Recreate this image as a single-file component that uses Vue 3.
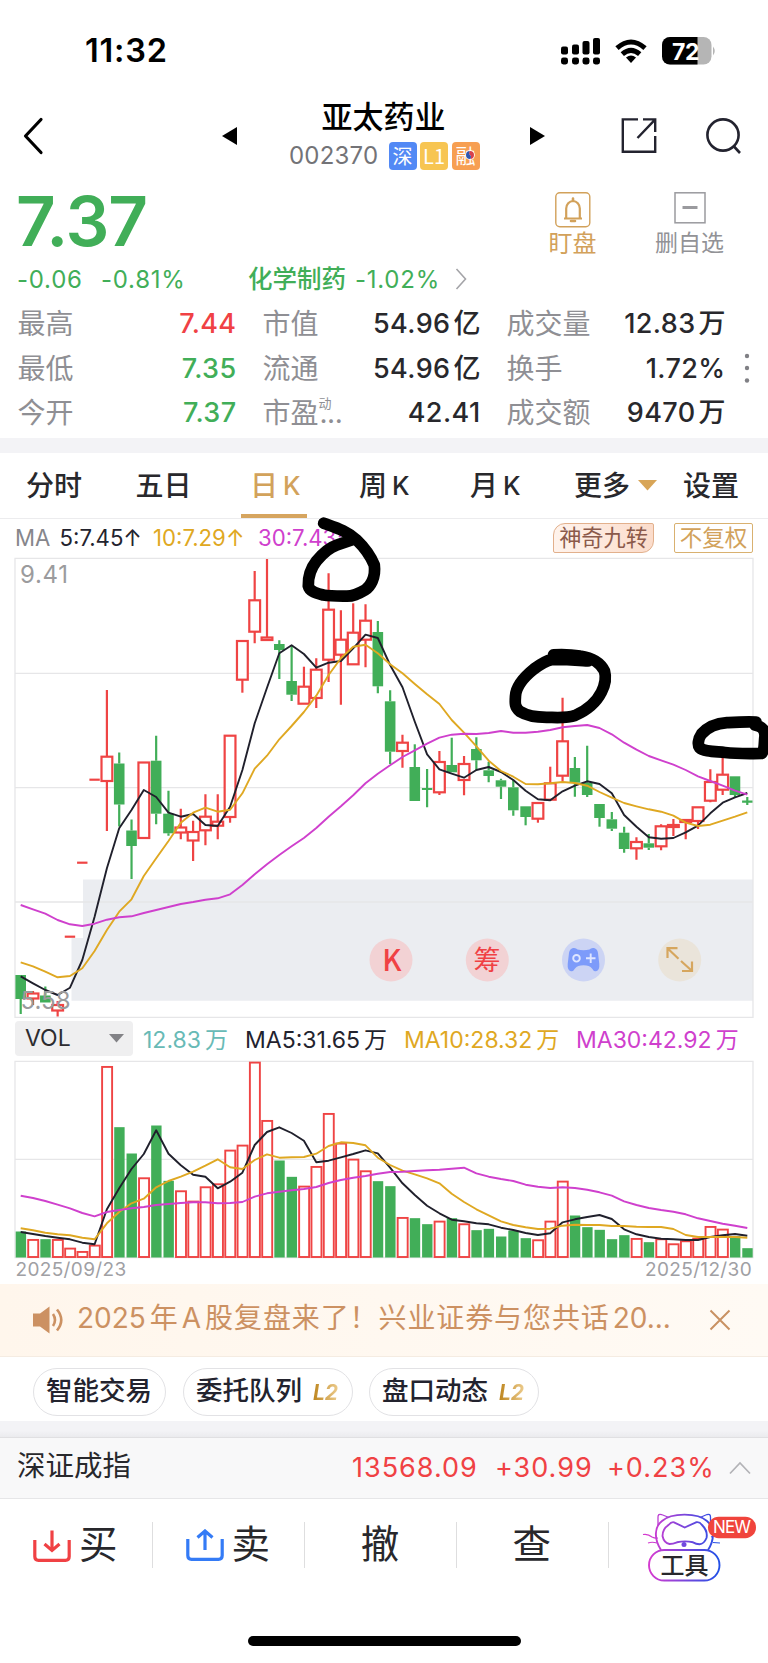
<script setup>
const STEP = 12.315
const X0 = 20.7
const cx = (i) => X0 + i * STEP

// type, body top, body bottom, wick high, wick low
const candles = [
  ['g', 975, 999, 975, 1014], ['r', 993.5, 998.5, 991, 1005], ['g', 995.5, 1002.5, 986.5, 1002.5], ['r', 1005, 1010.5, 1001, 1016.5],
  ['r', 936.7, 936.7, 936.7, 936.7], ['r', 862.7, 862.7, 862.7, 862.7], ['r', 779.7, 779.7, 779.7, 779.7], ['r', 756.7, 781, 690, 831],
  ['g', 763.5, 804.5, 752.5, 826.5], ['g', 830.5, 846, 819.5, 879], ['r', 762.5, 838, 762.5, 838], ['g', 760.7, 813.7, 735.7, 824.3],
  ['g', 813.7, 833.3, 790.7, 835.7], ['r', 827.5, 832.5, 808.7, 839.3], ['r', 832, 840.5, 820.7, 861], ['r', 816.7, 830.3, 794.3, 845.3],
  ['r', 821.7, 825.7, 794.3, 839.3], ['r', 735.7, 817, 735.7, 822.7], ['r', 641, 679.7, 641, 692.7], ['r', 600.3, 631.7, 571, 643.3],
  ['r', 637.5, 640, 559, 640], ['g', 644, 650, 640.3, 679], ['g', 681, 694.7, 645.7, 701], ['r', 686.7, 703.7, 666.7, 703.7],
  ['r', 669.7, 698, 658.3, 708], ['r', 609.7, 659.7, 573.3, 682], ['r', 639.7, 654.7, 610.3, 704.7], ['r', 632.7, 664.3, 603.3, 664.3],
  ['r', 620.7, 639.7, 604.3, 667.3], ['g', 632, 686.3, 621, 693.3], ['g', 701.3, 751.7, 690.3, 764], ['r', 742.7, 751, 734.7, 767.7],
  ['g', 767, 801, 744.3, 801], ['g', 789, 789, 769, 807.3], ['r', 762, 792.3, 751, 795], ['g', 765, 772.3, 737.7, 772.3],
  ['r', 764, 780, 756, 795.3], ['g', 749, 760.3, 737.3, 770], ['g', 770.3, 776, 761.7, 782.3], ['g', 780.3, 786.7, 778.7, 799],
  ['g', 787.3, 810.3, 780, 815.7], ['g', 806.3, 817, 806.3, 825.3], ['r', 803, 818.7, 803, 822.7], ['r', 783.3, 799.7, 766.7, 799.7],
  ['r', 741.3, 775.7, 697.7, 781.7], ['g', 768, 782.7, 757, 796.7], ['g', 782.7, 795, 745.7, 797], ['g', 804, 818, 804, 826.7],
  ['g', 819.3, 828.7, 812, 831], ['g', 832.7, 849, 826.7, 852.7], ['r', 842, 848.3, 837.3, 859.7], ['g', 843.3, 847.7, 834, 850],
  ['r', 826.3, 846.3, 824.3, 850.3], ['r', 825, 827, 819, 836], ['r', 820, 822, 819, 839.3], ['r', 807.3, 821, 807.3, 829],
  ['r', 782, 800.7, 769.3, 802.3], ['r', 774.7, 789.7, 753, 795], ['g', 776.3, 795, 776.3, 798], ['g', 801.7, 801.7, 797, 805]
].map(([c, t, b, h, l], i) => ({ c, t, b, h, l, x: cx(i), flat: b - t < 0.5 }))

const line = (ys) => ys.map((y, i) => `${cx(i).toFixed(1)},${y.toFixed(1)}`).join(' ')
const ma5 = line([976.3, 983.3, 990, 995, 987.7, 960, 916.7, 868.3, 828.3, 810, 790, 797, 812.7, 816.7, 814, 825, 826, 806.7, 770, 723.3,
  687.7, 653.3, 645.3, 654, 667.7, 662.7, 661, 648.3, 634.7, 638, 665, 687.3, 721.7, 754.3, 769.3, 773.7, 777.7, 770, 767, 772,
  780, 790.7, 799.3, 800.3, 791.3, 785.7, 781.3, 784, 793.3, 815, 826.7, 837.3, 838.7, 838, 832.3, 825.7, 813.3, 802.7, 797.3, 793])
const ma10 = line([962.3, 966.3, 971.7, 977.3, 976, 968.3, 951, 930, 911.7, 899.3, 876, 858.3, 841, 822.7, 812.7, 807.7, 811.7, 809.7, 793.3, 768.7,
  755.7, 739.3, 726, 712, 695.7, 675, 658.3, 646.7, 644.7, 653.3, 664.3, 673.3, 684, 694.3, 704, 720, 732.7, 746.3, 760.7, 771,
  776.7, 784, 784.3, 783.3, 782, 783, 785.7, 792, 797.7, 803, 806.3, 809.3, 811.7, 815.7, 822.7, 826, 824.7, 820.7, 816.7, 812.3])
const ma30 = line([905, 909.3, 913.7, 920, 924.3, 926, 923.7, 919.7, 917.3, 916.3, 913, 910, 907, 904, 902, 899.7, 898.3, 894.3, 885, 874.3,
  864.3, 855, 846.3, 838, 828, 816.7, 806.3, 795.3, 783.3, 773.7, 765.3, 757, 750.3, 743.7, 737.7, 734.7, 733.7, 734, 733, 731,
  732.7, 732.7, 731.7, 730, 727.3, 726, 725, 728, 734.3, 742.7, 749.7, 756, 760.3, 764.7, 770, 776.3, 781, 785.7, 790.7, 794.7])

// volume values share a scale of three units per pixel, measured from y = 1010
const vy = (v) => 1010 + v / 3
const volumes = ('g666 r688 g689 r688 r714 r724 r705 r169 g353 g432 r503 g348 g514 r542 r573 r530 r521 r420 r405 r156 r331 g453 g502 r528 r469 r310 r399 r447 r482 g515 ' +
  'g530 r622 g626 g644 r633 g626 r641 g662 g658 g681 g663 g686 r689 r633 r513 g618 g653 g661 g689 g677 r685 g698 r686 r701 r692 r684 r649 r657 g680 g716')
  .split(' ').map((s, i) => ({ c: s[0], y: vy(+s.slice(1)), x: cx(i) }))
const vline = (vs) => line(vs.map(vy))
const v5 = vline([666, 672, 678, 683, 688, 698, 703, 598, 535, 477, 432, 361, 431, 466, 494, 500, 535, 515, 488, 405, 366, 352, 369, 392, 457, 452, 442, 432, 421, 430,
  473, 520, 555, 587, 610, 629, 634, 640, 643, 653, 660, 669, 675, 670, 637, 628, 621, 615, 627, 658, 673, 681, 686, 688, 690, 690, 681, 676, 672, 677])
const v10 = vline([655, 661, 668, 673, 676, 683, 688, 640, 606, 580, 566, 532, 513, 500, 485, 467, 448, 472, 477, 450, 433, 443, 442, 441, 431, 408, 397, 399, 406, 443,
  465, 482, 493, 505, 520, 551, 576, 598, 616, 634, 645, 652, 657, 656, 647, 644, 645, 645, 648, 648, 650, 651, 651, 657, 675, 681, 681, 681, 681, 683])
const v30 = vline([557, 564, 573, 584, 595, 609, 619, 606, 600, 595, 591, 585, 582, 579, 577, 577, 580, 579, 576, 560, 550, 545, 541, 537, 531, 519, 510, 503, 498, 491,
  486, 485, 483, 481, 479, 476, 473, 490, 500, 507, 513, 524, 530, 534, 532, 534, 539, 547, 557, 574, 585, 594, 600, 605, 613, 625, 633, 641, 647, 654])

const stats = [
  { a: '最高', av: '7.44', ac: 'red', b: '市值', bv: '54.96', bu: '亿', c: '成交量', cv: '12.83', cu: '万' },
  { a: '最低', av: '7.35', ac: 'green', b: '流通', bv: '54.96', bu: '亿', c: '换手', cv: '1.72%', cu: '' },
  { a: '今开', av: '7.37', ac: 'green', b: '市盈', sup: '动', bv: '42.41', bu: '', c: '成交额', cv: '9470', cu: '万' }
]
</script>

<template>
  <div class="screen">
    <header class="status">
      <span class="time">11:32</span>
      <svg class="status-icons" width="160" height="32" viewBox="558 34 160 32">
        <g>
          <rect x="561" y="46.5" width="7" height="8" rx="2" /><rect x="572" y="44.5" width="7" height="10" rx="2" />
          <rect x="582.5" y="41" width="7" height="13.5" rx="2" /><rect x="593" y="38" width="7" height="16.5" rx="2" />
          <rect v-for="x in [561, 572, 582.5, 593]" :key="x" :x="x" y="57.5" width="7" height="7" rx="2.4" />
        </g>
        <g fill="none" stroke="#000" stroke-width="5">
          <path d="M617 48.2Q631 35.8 645 48.2" /><path d="M622.3 54.2Q631 46.6 639.7 54.2" />
        </g>
        <path d="M626 57.4Q631 53.4 636 57.4L631 63Z" />
        <rect x="662" y="37" width="49.500" height="27.500" rx="8" fill="#b5b5b5" />
        <path d="M670 37H697.500V64.500H670A8 8 0 0 1 662 56.500V45A8 8 0 0 1 670 37Z" />
        <path d="M713 46.500Q716.500 51 713 55.500Z" fill="#b5b5b5" />
        <text x="685.500" y="59.500" text-anchor="middle" class="batt">72</text>
      </svg>
    </header>

    <nav class="head">
      <svg class="back" width="24" height="40" viewBox="0 0 24 40"><path d="M20 3.500 4.500 20 20 36.500" fill="none" stroke="#000" stroke-width="3.200" stroke-linecap="round" stroke-linejoin="round" /></svg>
      <svg class="prev" width="15" height="18" viewBox="0 0 15 18"><path d="M0 9 15 0V18Z" /></svg>
      <div class="name">
        <h1>亚太药业</h1>
        <div class="code">
          <span class="num">002370</span>
          <span class="tag blue">深</span><span class="tag yellow">L1</span>
          <span class="tag orange">融<svg width="10" height="10" viewBox="0 0 10 10"><circle cx="5" cy="5" r="4.800" fill="#fff" /><path d="M5 1a4 4 0 0 1 0 8Q7 7 5 5T5 1Z" fill="#d8414d" /><path d="M5 9A4 4 0 0 1 5 1Q3 3 5 5T5 9Z" fill="#2f57b0" /></svg></span>
        </div>
      </div>
      <svg class="next" width="15" height="18" viewBox="0 0 15 18"><path d="M15 9 0 0V18Z" /></svg>
      <svg class="share" width="36" height="38" viewBox="0 0 36 38" fill="none" stroke="#23232f" stroke-width="2.400"><path d="M17 2.400H1.800V34.800H34.200V19M34.200 15V2.400H22M34 2.600 16.500 21" /></svg>
      <svg class="search" width="38" height="38" viewBox="0 0 38 38" fill="none" stroke="#23232f" stroke-width="2.600"><circle cx="18" cy="18" r="15.600" /><path d="M29 29.500 35 36" /></svg>
    </nav>

    <section class="quote">
      <div class="price">7.37</div>
      <div class="act gold">
        <svg width="36" height="36" viewBox="0 0 36 36" fill="none" stroke="#d2a15a"><rect x=".8" y=".8" width="34" height="34" rx="4" stroke-width="1.400" /><path d="M9 26.500H27M11.200 26V16.500a6.800 7.500 0 0 1 13.600 0V26" stroke-width="2.200" /><path d="M18 9V6.500M16 29h4" stroke-width="2.600" stroke-linecap="round" /></svg>
        <span>盯盘</span>
      </div>
      <div class="act grey">
        <svg width="32" height="36" viewBox="0 0 32 36" fill="none" stroke="#9a9a9e"><rect x="1" y="0.800" width="30" height="30" stroke-width="1.500" /><path d="M8.500 15.500H23.500" stroke-width="3" /></svg>
        <span>删自选</span>
      </div>
    </section>

    <section class="change">
      <span>-0.06</span><span>-0.81%</span><span class="cn">化学制药</span><span>-1.02%</span>
      <svg width="12" height="24" viewBox="0 0 12 24"><path d="M1.500 2 10.500 12 1.500 22" fill="none" stroke="#a4a4a8" stroke-width="1.600" /></svg>
    </section>

    <section class="stats">
      <div v-for="s in stats" :key="s.a" class="row">
        <span class="lab">{{ s.a }}</span><b :class="s.ac">{{ s.av }}</b>
        <span class="lab b">{{ s.b }}<sup v-if="s.sup">{{ s.sup }}</sup><i v-if="s.sup">...</i></span><b>{{ s.bv }}<u v-if="s.bu">{{ s.bu }}</u></b>
        <span class="lab c">{{ s.c }}</span><b>{{ s.cv }}<u v-if="s.cu">{{ s.cu }}</u></b>
      </div>
      <svg class="more" width="6" height="32" viewBox="0 0 6 32" fill="#808085"><circle cx="3" cy="4" r="2.200" /><circle cx="3" cy="16" r="2.200" /><circle cx="3" cy="28.500" r="2.200" /></svg>
    </section>

    <div class="band"></div>

    <nav class="tabs">
      <span>分时</span><span>五日</span><span class="on">日<em>K</em></span><span>周<em>K</em></span><span>月<em>K</em></span>
      <span>更多<svg width="19" height="11" viewBox="0 0 19 11"><path d="M0 0H19L9.500 10.500Z" fill="#d8a557" /></svg></span><span>设置</span>
    </nav>

    <section class="chart">
      <div class="legend">
        <span class="mut">MA</span><span class="dark">5:7.45↑</span><span class="amber">10:7.29↑</span><span class="pink">30:7.43↑</span>
        <span class="nine">神奇九转</span><span class="adj">不复权</span>
      </div>
      <svg class="plot" width="768" height="462" viewBox="0 557 768 462">
        <path d="M71.500 938H83V879.500H753V1000.700H71.500Z" fill="#ebedf1" />
        <g stroke="#e6e6e8" stroke-width="1.300" fill="none">
          <path d="M15 558.300H753V1017.300H15ZM15 673.300H753M15 787.700H753M15 902H753" />
        </g>
        <g v-for="(k, i) in candles" :key="i" :class="k.c === 'r' ? 'up' : 'down'">
          <path v-if="k.flat" :d="`M${k.x - 5.2} ${k.t}h10.400M${k.x} ${k.h}V${k.l}`" />
          <template v-else>
            <path :d="`M${k.x} ${k.h}V${k.t}M${k.x} ${k.b}V${k.l}`" />
            <rect v-if="k.c === 'r'" :x="k.x - 5.4" :y="k.t" width="10.800" :height="k.b - k.t" />
            <rect v-else class="solid" :x="k.x - 5.3" :y="k.t" width="10.600" :height="k.b - k.t" />
          </template>
        </g>
        <g fill="none" stroke-width="1.900" stroke-linejoin="round">
          <polyline :points="ma5" stroke="#20202c" /><polyline :points="ma10" stroke="#dfa822" /><polyline :points="ma30" stroke="#cf40cd" />
        </g>
        <g class="scale"><text x="20" y="582.500" textLength="48">9.41</text><text x="20.500" y="1009" textLength="50">5.58</text></g>
        <g>
          <circle cx="391" cy="960" r="21.500" fill="#f2d2d4" /><circle cx="487.300" cy="960" r="21.500" fill="#f2d2d4" />
          <circle cx="583.500" cy="960" r="21.500" fill="#ccd4f4" /><circle cx="679.700" cy="960" r="21.500" fill="#eae4da" />
          <text class="kk" x="392" y="970.700" text-anchor="middle">K</text><text class="chip" x="487" y="970.300" text-anchor="middle">筹</text>
          <path d="M573 948Q576 947.500 577.500 949.500 583.500 951 589.500 949.500 591 947.500 594 948 597.500 949 598 953L599.300 964Q599.800 970.500 596 971.200 593.500 971.500 592 968.500 589.500 965.300 583.500 965.300 577.500 965.300 575 968.500 573.500 971.500 571 971.200 567.200 970.500 567.700 964L569 953Q569.500 949 573 948Z" fill="#7d9bfa" />
          <g fill="none" stroke="#dfe6ff" stroke-width="1.900"><circle cx="576.500" cy="958.300" r="3.300" /><path d="M586 958.300h9.500M590.700 953.500v9.500" /></g>
          <g fill="none" stroke="#d6a65e" stroke-width="2.200"><path d="M667.500 958V948.200H677.500M668 948.700 678.500 958.700M692 961.500V971H682M691.500 970.500 681 961" /></g>
        </g>
      </svg>
      <div class="vol-legend">
        <span class="pick">VOL<svg width="15" height="9" viewBox="0 0 15 9"><path d="M0 0H15L7.500 8.500Z" fill="#828286" /></svg></span>
        <span class="teal">12.83<u>万</u></span><span class="dark">MA5:31.65<u>万</u></span><span class="amber">MA10:28.32<u>万</u></span><span class="pink">MA30:42.92<u>万</u></span>
      </div>
      <svg class="plot" width="768" height="199" viewBox="0 1060 768 199">
        <path d="M15 1061.300H753V1257.500H15ZM15 1159.300H753" stroke="#e6e6e8" stroke-width="1.300" fill="none" />
        <g v-for="(v, i) in volumes" :key="i" :class="v.c === 'r' ? 'up vol' : 'down'">
          <rect v-if="v.c === 'r'" :x="v.x - 4.8" :y="v.y + .6" width="10" :height="1256.400 - v.y" />
          <rect v-else class="solid" :x="v.x - 5" :y="v.y - .5" width="10.400" :height="1258 - v.y" />
        </g>
        <g fill="none" stroke-width="1.900" stroke-linejoin="round">
          <polyline :points="v5" stroke="#20202c" /><polyline :points="v10" stroke="#dfa822" /><polyline :points="v30" stroke="#cf40cd" />
        </g>
      </svg>
      <div class="dates"><span>2025/09/23</span><span>2025/12/30</span></div>
      <svg class="marks" width="768" height="250" viewBox="0 515 768 250" fill="none" stroke="#000" stroke-width="11.700" stroke-linecap="round" stroke-linejoin="round">
        <path d="M323.700 523.200C337 528 347 531 356.700 540 364 547 371 557 374.300 565 376 578 370 587 365 590 358 594 353 596.500 346 596.200 335 596 330 596 323.300 595 314 592.500 309.500 591 308.300 586 308 578 311 568 316.700 560.700 324 552 331 547 337 545L353 539.500" />
        <path d="M588 661C580 660.500 570 659.500 552 659.500 545 661 538 666 534 669 524 677 516 687 515.500 696 515 703 514.500 707 520 711.500 528 716.500 538 717.300 546.700 717.300 557 717.500 567 718.500 575 715.500 590 709 598 699 601.500 692 605 685 606.500 678 604.500 671 600 662 591 657.500 580 656 571 654.500 562 654.300 553.500 654.800" />
        <path d="M756 722C745 721.500 738 722 727 722.700 715 723.500 706 729 701.500 734 698 739 697.500 745 699.500 747.500 704 752 716 751.500 725 752.500 738 754 748 753.500 761.700 753.500 765 750 764 742 765 736 765 728 760 726 755 725" />
      </svg>
    </section>

    <section class="notice">
      <svg class="speaker" width="34" height="30" viewBox="0 0 34 30"><path d="M1 8.500H8L17.500 1.500V28.500L8 21.500H1Z" fill="#cc9162" /><path d="M21 9Q25 15 21 21M25 4.500Q33.500 15 25 25.500" fill="none" stroke="#cc9162" stroke-width="2.600" /></svg>
      <span class="msg"><i>2025</i>年<i>A</i>股复盘来了！兴业证券与您共话<i>20...</i></span>
      <svg class="close" width="22" height="22" viewBox="0 0 22 22"><path d="M1.500 1.500 20.500 20.500M20.500 1.500 1.500 20.500" stroke="#c99162" stroke-width="2" /></svg>
    </section>

    <section class="pills">
      <span class="p1">智能交易</span><span class="p2">委托队列<em>L2</em></span><span class="p3">盘口动态<em>L2</em></span>
    </section>

    <div class="band low"></div>

    <section class="index">
      <span class="iname">深证成指</span><span class="v">13568.09</span><span class="v">+30.99</span><span class="v">+0.23%</span>
      <svg width="22" height="14" viewBox="0 0 22 14"><path d="M1 12.500 11 2 21 12.500" fill="none" stroke="#b3b3b7" stroke-width="1.700" /></svg>
    </section>

    <footer class="bar">
      <div><svg width="38" height="34" viewBox="0 0 38 34" fill="none" stroke="#f04144" stroke-width="3.200"><path d="M1.800 11V27.500Q1.800 31.300 5.500 31.300H32.500Q36.200 31.300 36.200 27.500V11" /><path d="M19 1.500V20M11.500 15 19 21.500 26.500 15" /></svg><span>买</span></div>
      <div><svg width="38" height="34" viewBox="0 0 38 34" fill="none" stroke="#347bf6" stroke-width="3.200"><path d="M1.800 10V26.500Q1.800 30.300 5.500 30.300H32.500Q36.200 30.300 36.200 26.500V10" /><path d="M19 21V3M11.500 8.500 19 2 26.500 8.500" /></svg><span>卖</span></div>
      <div class="mid"><span>撤</span></div>
      <div class="mid"><span>查</span></div>
      <div class="tool">
        <svg width="124" height="74" viewBox="640 1510 124 74" fill="none" stroke="url(#cat)" stroke-width="1.900">
          <defs><linearGradient id="cat" gradientUnits="userSpaceOnUse" x1="650" y1="0" x2="718" y2="0"><stop offset="0" stop-color="#d43bd0" /><stop offset="1" stop-color="#2350e6" /></linearGradient></defs>
          <path d="M661 1550C654 1539 654 1527 662 1521 671 1512.500 698 1512.500 707 1521 715 1528 714.500 1540 708 1550" />
          <path d="M658 1526V1517Q658 1513.500 661.500 1514.500L669 1517.500M700 1517.500 707 1514.500Q710.500 1513.500 710.500 1517V1526" stroke-width="1.300" />
          <path d="M674 1522.300 684.700 1527.500 696 1522.300Q699.500 1521.500 702 1525 708 1531 706.500 1538 704 1544 699.500 1544.200 696 1544 693 1542.300 685 1540.500 677 1542.300 673 1544 669.500 1544 664 1543 662.500 1536 662.500 1529 668.500 1525 671.500 1521.500 674 1522.300Z" />
          <path d="M643 1534.500Q648 1533.500 652 1537 655 1538.500 658 1538M648 1543Q652 1541.500 657 1543M711 1537 717 1535M713 1542.500 720 1543" stroke-width="1.200" />
          <circle cx="684" cy="1544.500" r="2.500" fill="#7048df" stroke="none" />
          <rect x="649" y="1550" width="70.500" height="30.500" rx="15.200" fill="#fff" />
          <rect x="708" y="1516.700" width="48" height="21.500" rx="10.700" fill="#f0443c" stroke="none" />
          <text class="tt" x="684.500" y="1573.700" text-anchor="middle">工具</text>
          <text class="nw" x="713" y="1533.300" textLength="38">NEW</text>
        </svg>
      </div>
    </footer>
    <div class="home"></div>
  </div>
</template>

<style>
body { background: #fff; }
</style>

<style scoped>
.screen { width: 768px; height: 1663px; overflow: hidden; background: #fff; color: #28282c; font-family: Inter, "Noto Sans CJK SC", sans-serif; white-space: nowrap; }
.screen svg { display: block; flex: none; }
i, em { font-style: normal; }
u { text-decoration: none; }
.red { color: #f04144; }
.green { color: #41ae58; }

.status { height: 96px; box-sizing: border-box; padding: 34px 50px 0 85px; display: flex; justify-content: space-between; }
.time { font-size: 32.500px; font-weight: 600; line-height: 34px; color: #000; letter-spacing: .8px; }
.batt { font: 700 23px Inter, sans-serif; fill: #fff; letter-spacing: -.5px; }

.head { height: 90px; display: flex; align-items: flex-start; }
.back { margin: 20px 0 0 21px; }
.prev { margin: 31px 0 0 177px; }
.name { width: 293px; }
h1 { margin: 0; text-align: center; font-weight: 500; font-size: 31px; line-height: 42px; color: #000; }
.code { display: flex; align-items: center; gap: 3.500px; margin: 3.500px 0 0 52px; height: 28px; font-size: 24px; color: #737377; }
.num { width: 96px; letter-spacing: .2px; }
.tag { position: relative; width: 28px; height: 28px; border-radius: 4px; color: #fff; font-size: 20px; line-height: 27px; text-align: center; font-family: "Noto Sans CJK SC", sans-serif; }
.tag svg { position: absolute; left: 13px; top: 8px; }
.blue { background: #5289f5; } .yellow { background: #f7c552; } .orange { background: #f79f52; }
.next { margin: 31px 0 0; }
.share { margin: 21px 0 0 76px; }
.search { margin: 21px 0 0 48px; }

.quote { height: 74px; display: flex; }
.price { width: 532px; box-sizing: border-box; padding-left: 16px; font-size: 69px; font-weight: 600; line-height: 70px; letter-spacing: -1px; color: #41ae58; }
.act { width: 81px; padding-top: 6px; display: flex; flex-direction: column; align-items: center; font-size: 24px; line-height: 31px; }
.act.grey { margin-left: 36px; font-size: 23px; }
.gold { color: #d2a15a; } .grey { color: #929296; }

.change { height: 40px; display: grid; grid-template-columns: 84px 147px 107px 100px auto; padding: 0 0 2px 17px; box-sizing: border-box; align-items: center; font-size: 24px; color: #41ae58; letter-spacing: .75px; }
.cn { font-size: 24.500px; letter-spacing: 0; font-weight: 500; line-height: 30px; }

.stats { position: relative; height: 138px; padding-top: 1px; box-sizing: border-box; }
.row { height: 44.700px; display: grid; grid-template-columns: 90px 129px 115px 129px 131px 114px; padding-left: 17.500px; line-height: 46px; font-size: 28px; }
.lab { color: #8f8f94; }
.row .lab.b { padding-left: 26px; }
.row .lab.c { padding-left: 26px; }
.row b { font-weight: 500; font-size: 27px; text-align: right; letter-spacing: .4px; }
.row b u { margin-left: 3px; font-size: 27px; letter-spacing: 0; }
.row .lab.b { position: relative; }
sup { font-size: 13px; line-height: 1; position: relative; top: -5px; }
.row i { margin-left: -12px; letter-spacing: -.5px; }
.more { position: absolute; left: 744px; top: 52px; }

.band { height: 15px; background: #f3f3f6; }
.tabs { height: 66px; box-sizing: border-box; display: grid; grid-template-columns: 109.500px 106.500px 117px 111px 104px 109px auto; padding-left: 26px; border-bottom: 1px solid #ececee; font-size: 28px; font-weight: 500; line-height: 64px; }
.tabs span { position: relative; display: flex; align-items: center; }
.tabs em { margin-left: 5px; font-size: 25.500px; }
.tabs svg { margin-left: 8px; }
.tabs .on { color: #d2a25b; padding-left: 8px; }
.tabs .on::after { content: ""; position: absolute; left: -1px; bottom: 0; width: 66px; height: 4px; background: #d6a55f; }

.chart { position: relative; height: 765px; }
.legend { height: 38px; display: grid; grid-template-columns: 44.500px 93.500px 105px 295px 121px 79px; padding-left: 15px; align-items: center; font-size: 22.200px; }
.legend span:nth-child(-n+4) { position: relative; top: -1px; }
.mut { color: #86868b; } .dark { color: #23232e; } .amber { color: #dfa822; } .pink { color: #cf40cd; } .teal { color: #68bab6; }
.nine { width: 101px; height: 30px; box-sizing: border-box; border: 1px solid #e2b08c; border-radius: 12px 2px 12px 2px; background: linear-gradient(90deg, #fff3ec, #fbdccb); color: #8b5a4b; text-align: center; line-height: 28px; font-size: 22.200px; }
.adj { height: 30px; box-sizing: border-box; border: 1.500px solid #d9b170; border-radius: 2px; color: #d2a25b; text-align: center; line-height: 27px; font-size: 22.500px; }
.up { fill: none; stroke: #ef4444; stroke-width: 2.200; }
.up rect { fill: #fff; }
.up.vol { stroke-width: 1.900; }
.down { fill: none; stroke: #41ae58; stroke-width: 2.200; }
.down .solid { fill: #41ae58; stroke: none; }
.scale { font-size: 24px; fill: #9b9b9d; }
.kk { font-family: "Noto Sans CJK SC", sans-serif; font-size: 29px; font-weight: 500; fill: #f04144; }
.chip { font-size: 27px; fill: #f04144; }
.vol-legend { height: 41px; box-sizing: border-box; display: grid; grid-template-columns: 128px 102px 159px 172px auto; padding: 0 0 3px 15px; align-items: center; font-size: 23px; }
.vol-legend u { margin-left: 4px; }
.pick { width: 118px; height: 35px; box-sizing: border-box; padding: 0 9px 0 10px; background: #efeff0; border-radius: 4px; display: flex; align-items: center; justify-content: space-between; color: #2c2c30; }
.dates { display: flex; justify-content: space-between; padding: 0 16px 0 15.500px; height: 22px; line-height: 22px; font-size: 19px; letter-spacing: .35px; color: #a0a0a4; }
.marks { position: absolute; left: 0; top: -4px; }

.notice { height: 73px; box-sizing: border-box; display: flex; align-items: center; background: linear-gradient(90deg, #fff6ec, #fffaf4); border-bottom: 1px solid #f5ece2; color: #cc9162; }
.speaker { margin-left: 32px; }
.msg { width: 643px; height: 44px; line-height: 40px; padding-left: 11px; box-sizing: border-box; font-size: 28px; letter-spacing: .9px; }
.msg i { margin-right: 4px; letter-spacing: 0; }
.msg i + i { margin-left: 3px; }

.pills { height: 64px; box-sizing: border-box; padding: 11px 0 0 33px; display: flex; }
.pills span { height: 48px; box-sizing: border-box; border: 1.500px solid #e2e2e5; border-radius: 24px; padding-left: 12px; font-size: 26.500px; font-weight: 500; line-height: 43px; color: #23232e; }
.p1 { width: 133px; }
.p2 { width: 170px; margin-left: 17px; }
.p3 { width: 170px; margin-left: 16px; }
.pills em { margin-left: 11px; font-size: 21px; font-style: italic; font-weight: 700; background: linear-gradient(90deg, #bd851e, #eccb8c); background-clip: text; color: transparent; }
.band.low { height: 16px; background: linear-gradient(#f3f3f6 60%, #ebebee); }

.index { height: 62px; box-sizing: border-box; border-top: 1px solid #e0e0e2; border-bottom: 1px solid #e6e6e8; background: #f8f8f9; display: grid; grid-template-columns: 335px 143px 112px 122px auto; align-items: center; padding: 0 0 1px 17px; font-size: 27px; }
.iname { font-size: 28.500px; height: 44px; line-height: 40px; }
.index .v { color: #f04144; letter-spacing: 1px; }

.bar { height: 137px; display: grid; grid-template-columns: 152.500px 152.500px 152px 151.500px auto; }
.bar div { position: relative; display: flex; align-items: flex-start; padding: 30px 0 0 33px; box-sizing: border-box; font-size: 38.500px; }
.bar div:not(.tool)::after { content: ""; position: absolute; right: 0; top: 23px; width: 1px; height: 46px; background: #dededf; }
.bar div span { line-height: 38px; margin: -4px 0 0 8px; }
.bar .mid { justify-content: center; padding: 30px 2px 0 0; }
.bar .mid span { margin-left: 0; }
.bar .tool { padding: 11px 0 0 31px; }
.tt { font-size: 24px; font-weight: 500; fill: #28282c; stroke: none; }
.nw { font-size: 17px; fill: #fff; stroke: none; }
.home { width: 273px; height: 10px; margin-left: 248px; border-radius: 5px; background: #000; }
</style>
